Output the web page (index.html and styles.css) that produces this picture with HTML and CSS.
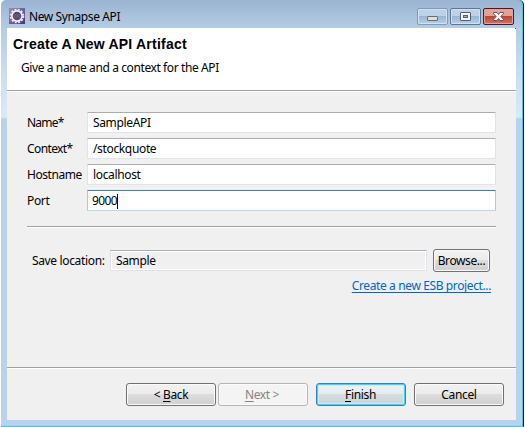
FILE: index.html
```html
<!DOCTYPE html>
<html lang="en">
<head>
<meta charset="utf-8">
<title>New Synapse API</title>
<link rel="stylesheet" href="styles.css">
</head>
<body>
<div class="window">
  <header class="titlebar">
    <svg class="app-icon" width="16" height="16" viewBox="0 0 16 16">
      <defs><linearGradient id="g" x1="0" y1="0" x2="1" y2="1"><stop offset="0" stop-color="#9a8cba"/><stop offset="1" stop-color="#493478"/></linearGradient></defs>
      <rect width="16" height="16" fill="url(#g)"/>
      <circle cx="8" cy="8" r="6.500" fill="none" stroke="#eee9f5" stroke-width="1.600" stroke-dasharray="2 1.400"/>
      <circle cx="8" cy="8" r="5.100" fill="#51466f" stroke="#f4f1f8" stroke-width="1.600"/>
      <path d="M4.500 7h7M4.500 9h7" stroke="#776d92" stroke-width=".8"/>
    </svg>
    <span class="title">New Synapse API</span>
    <div class="controls">
      <span class="ctl min"><svg width="29" height="15" viewBox="0 0 29 15"><rect x="9.5" y="7.5" width="10" height="4" rx=".5" fill="#dedfda" stroke="#686c72"/></svg></span>
      <span class="ctl max"><svg width="29" height="15" viewBox="0 0 29 15"><rect x="9.5" y="3.5" width="10" height="8" rx=".5" fill="#f4f4f2" stroke="#535d70"/><rect x="12.500" y="6.500" width="4" height="2" fill="#8eb1da" stroke="#535d70"/></svg></span>
      <span class="ctl close"><svg width="29" height="15" viewBox="0 0 29 15"><path d="M9.500 3.500h3.500l1.500 2 1.500-2h3.500v1.200l-2.700 2.800 2.700 2.800v1.200h-3.500l-1.500-2-1.500 2h-3.500v-1.200l2.700-2.800-2.700-2.800z" fill="#f4f4f4" stroke="#60566a"/></svg></span>
    </div>
  </header>
  <main class="dialog">
    <section class="banner">
      <h1>Create A New API Artifact</h1>
      <p>Give a name and a context for the API</p>
    </section>
    <form class="content">
      <div class="row"><label class="l-name">Name*</label><div class="field"><span>SampleAPI</span></div></div>
      <div class="row"><label class="l-context">Context*</label><div class="field"><span>/stockquote</span></div></div>
      <div class="row"><label class="l-host">Hostname</label><div class="field"><span>localhost</span></div></div>
      <div class="row"><label>Port</label><div class="field focus"><span class="v-port">9000</span><i class="caret"></i></div></div>
      <div class="rule"></div>
      <div class="save"><label>Save location:</label><div class="field readonly"><span>Sample</span></div><div class="btn browse"><span>Browse...</span></div></div>
      <div class="link-row"><a class="link">Create a new ESB project...</a></div>
    </form>
    <footer class="footer">
      <div class="btn back"><span>&lt; <u>B</u>ack</span></div>
      <div class="btn next"><span><u>N</u>ext &gt;</span></div>
      <div class="btn finish"><span><u>F</u>inish</span></div>
      <div class="btn cancel"><span>Cancel</span></div>
    </footer>
  </main>
</div>
</body>
</html>
```
FILE: styles.css
```css
* { box-sizing: border-box; }
body { margin: 0; background: #fff; font: 12px/16px "Noto Sans", "Open Sans", sans-serif; color: #000; letter-spacing: -.35px; }
.window {
  width: 523px; height: 427px; margin-left: 1px; padding: 0 7px 6px 6px;
  border-right: 1px solid #000; border-bottom: 1px solid #2bcfe6;
  box-shadow: inset -1px 0 #35d0ed;
  border-radius: 5px 5px 0 0;
  background: linear-gradient(#9ab4d1 0, #b4cce6 28px, #c9dcf0 70px, #dce9f6 117px, #b9d1ea 119px);
}
.titlebar { height: 28px; padding: 8px 2px 0; display: flex; align-items: flex-start; }
.app-icon { display: block; }
.title { margin-left: 4px; line-height: 17px; white-space: nowrap; letter-spacing: -.4px; }
.controls { margin-left: auto; display: flex; gap: 2px; }
.ctl { width: 31px; height: 17px; border: 1px solid #5c7696; border-radius: 2px; box-shadow: inset 0 0 0 1px #d3e2f2; background: linear-gradient(#bdd1e7 0 48%, #9ab6d3 50%, #b6d0ea); }
.ctl svg { display: block; }
.min { border-color: #8499b2; }
.close { border-color: #4b1522; box-shadow: inset 0 0 0 1px #e3a39a; background: linear-gradient(#e5a196 0 48%, #bb4630 50%, #cf7562); }
.dialog { width: 509px; height: 392px; background: #f0f0f0; display: flex; flex-direction: column; }
.banner { height: 63px; padding: 8px 6px 0; background: linear-gradient(to left, #f00 1px, transparent 1px) top right / 1px 1px no-repeat, #fff; border-bottom: 1px solid #a0a0a0; }
h1 { margin: 0; font: bold 14px/16px "Liberation Sans", Arial, sans-serif; letter-spacing: .22px; white-space: nowrap; }
.banner p { margin: 8px 0 0 8px; letter-spacing: -.4px; }
.content { height: 276px; padding: 20px 20px 0; border-top: 1px solid #fff; }
.row { height: 21px; margin-bottom: 5px; display: flex; align-items: flex-start; }
.row label { width: 60px; margin-top: 3px; }
.l-name { letter-spacing: -.8px; }
.l-context { letter-spacing: -.6px; }
.l-host { letter-spacing: -.45px; }
.field { flex: 1; height: 21px; border: 1px solid #e2e3ea; border-top-color: #abadb3; border-radius: 1px; background: #fff; padding: 2px 5px; display: flex; white-space: nowrap; }
.field.focus { border-color: #3d7bad #a5cbe5 #b7d9ed; padding-left: 4px; }
.v-port { letter-spacing: -.6px; }
.caret { width: 1px; height: 15px; margin-top: 1px; background: #000; }
.rule { height: 2px; margin-top: 15px; background: #a0a0a0; border-bottom: 1px solid #fff; }
.save { display: flex; margin: 21px 5px 0; align-items: center; height: 23px; }
.save label { width: 78px; white-space: nowrap; }
.readonly { flex: none; width: 317px; background: #f0f0f0; box-shadow: inset 0 0 0 1px #fff; }
.btn { height: 23px; border: 1px solid #707070; border-radius: 3px; box-shadow: inset 0 0 0 1px #fbfbfb; background: linear-gradient(#f2f2f2 0, #ebebeb 48%, #dddddd 50%, #cfcfcf); display: flex; justify-content: center; line-height: 21px; white-space: nowrap; }
.btn u { text-underline-offset: 2px; }
.browse { flex: none; width: 57px; margin-left: 6px; letter-spacing: -.4px; }
.link-row { display: flex; justify-content: flex-end; margin: 6px 5px 0; }
.link { color: #0066cc; text-decoration: underline; text-decoration-skip-ink: none; text-underline-offset: 2px; white-space: nowrap; letter-spacing: -.38px; }
.footer { height: 53px; border-top: 1px solid #a0a0a0; box-shadow: inset 0 1px #fff; padding: 15px 12px 0 0; display: flex; justify-content: flex-end; }
.footer .btn { width: 90px; }
.next { margin-left: 2px; padding-right: 2px; color: #838383; border-color: #b5b5b5; background: #f4f4f4; }
.finish { margin-left: 8px; padding-right: 1px; border-color: #3c7fb1; box-shadow: inset 0 0 0 1px #48d0f5, inset 0 0 0 2px #c5edf8; background: linear-gradient(#eef2f3 0, #e5ebee 48%, #d5dde1 50%, #cbd3d8); }
.cancel { margin-left: 8px; }
```
